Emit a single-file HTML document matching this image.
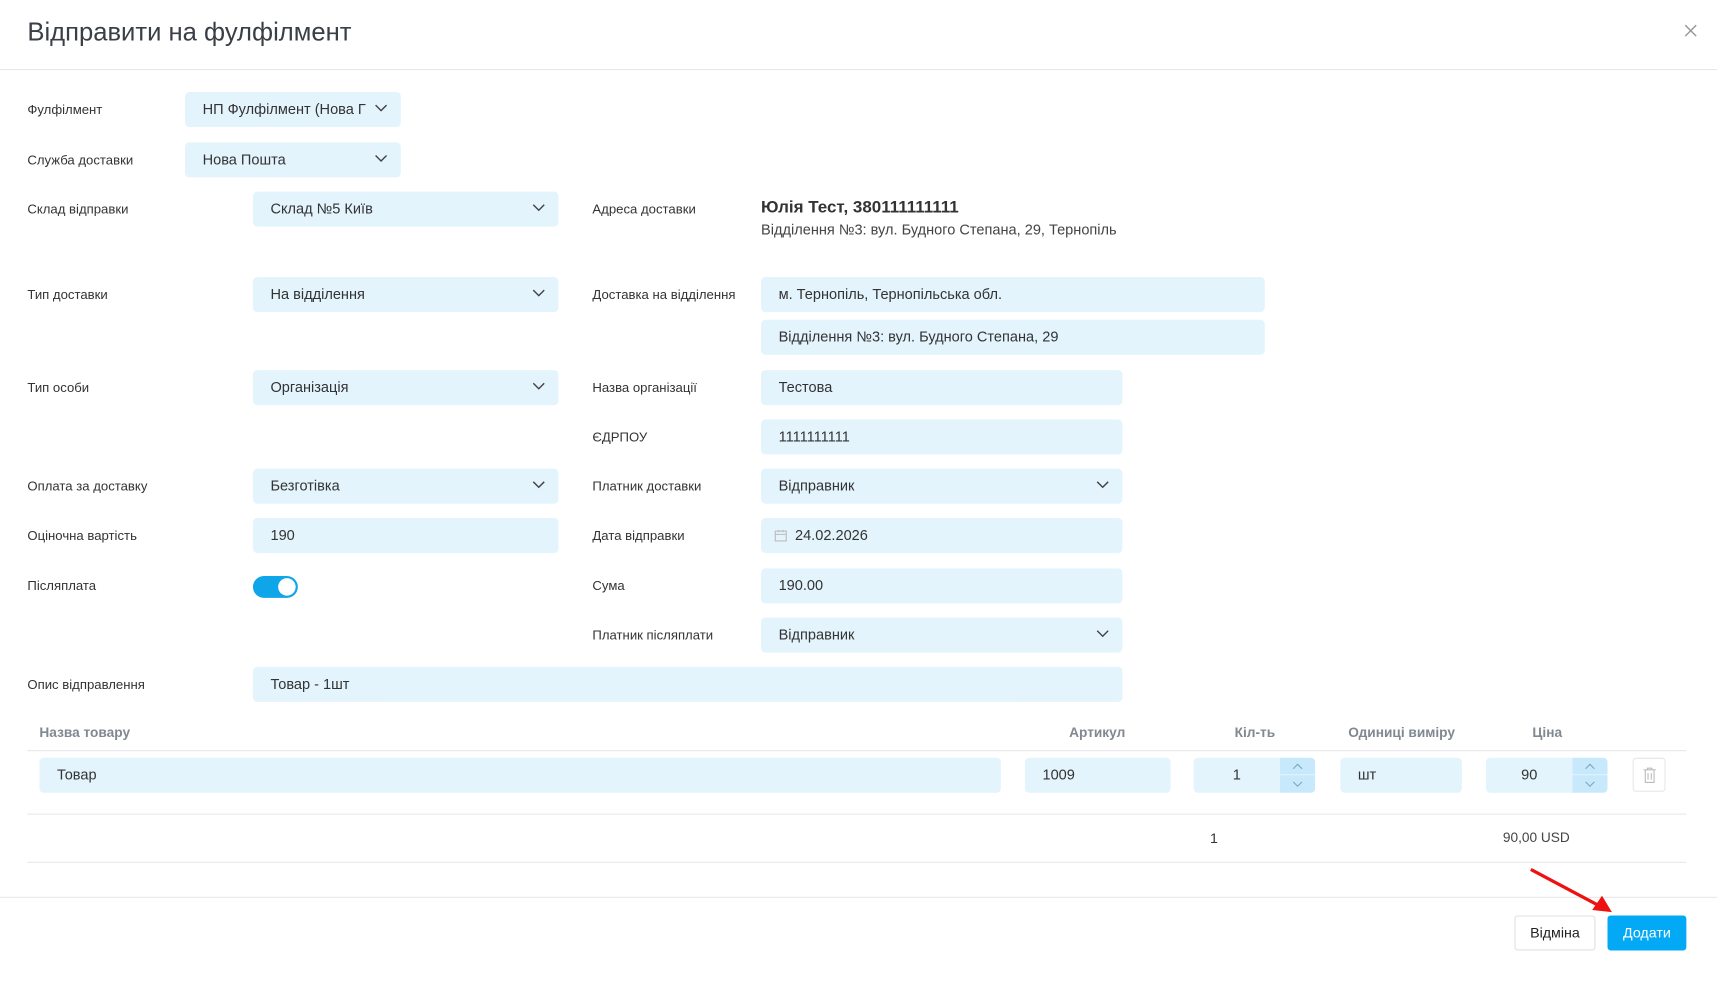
<!DOCTYPE html>
<html><head><meta charset="utf-8"><style>
html,body{margin:0;padding:0;background:#fff;overflow:hidden;width:1717px;height:993px}
#w{position:absolute;left:0;top:0;width:1568px;height:907px;transform:scale(1.09503);transform-origin:0 0;font-family:"Liberation Sans",sans-serif;color:#333}
.a{position:absolute}
.t{position:absolute;left:25px;top:16px;font-size:23.4px;color:#3a3f45}
.l{position:absolute;left:25px;font-size:12px;color:#333;line-height:16px}
.l2{left:541px}
.f{position:absolute;background:#e3f4fd;border-radius:4px;height:32px;line-height:32px;font-size:13.3px;color:#333;padding-left:16px;box-sizing:border-box;white-space:nowrap;overflow:hidden}
.f svg.c{position:absolute;right:12px;top:11px}
.hl{position:absolute;height:1px;background:#e8e8ec}
.th{position:absolute;top:662px;font-size:12.5px;font-weight:bold;color:#808890}
.sp{position:absolute;right:0;top:0;width:32px;height:32px;background:#c7e9fb}
.sp:after{content:"";position:absolute;left:0;right:0;top:15px;height:1px;background:#e3f4fd}
</style></head><body><div id="w">
<div class="t">Відправити на фулфілмент</div>
<svg class="a" style="left:1538px;top:22px" width="12" height="12"><path d="M1 1L11 11M11 1L1 11" stroke="#999" stroke-width="1.3"/></svg>
<div class="hl" style="left:0;right:0;top:63px"></div>

<div class="l" style="top:92px">Фулфілмент</div>
<div class="f" style="left:169px;top:84px;width:197px;padding-right:30px">НП Фулфілмент (Нова Г<svg class="c" width="12" height="8"><path d="M1 1L6 6L11 1" stroke="#444" fill="none" stroke-width="1.3"/></svg></div>
<div class="l" style="top:138px">Служба доставки</div>
<div class="f" style="left:169px;top:130px;width:197px">Нова Пошта<svg class="c" width="12" height="8"><path d="M1 1L6 6L11 1" stroke="#444" fill="none" stroke-width="1.3"/></svg></div>

<div class="l" style="top:183px">Склад відправки</div>
<div class="f" style="left:231px;top:175px;width:279px">Склад №5 Київ<svg class="c" width="12" height="8"><path d="M1 1L6 6L11 1" stroke="#444" fill="none" stroke-width="1.3"/></svg></div>
<div class="l l2" style="top:183px">Адреса доставки</div>
<div class="a" style="left:695px;top:181px;font-size:15.5px;font-weight:bold;color:#333">Юлія Тест, 380111111111</div>
<div class="a" style="left:695px;top:202px;font-size:13.3px;color:#444">Відділення №3: вул. Будного Степана, 29, Тернопіль</div>

<div class="l" style="top:261px">Тип доставки</div>
<div class="f" style="left:231px;top:253px;width:279px">На відділення<svg class="c" width="12" height="8"><path d="M1 1L6 6L11 1" stroke="#444" fill="none" stroke-width="1.3"/></svg></div>
<div class="l l2" style="top:261px">Доставка на відділення</div>
<div class="f" style="left:695px;top:253px;width:460px">м. Тернопіль, Тернопільська обл.</div>
<div class="f" style="left:695px;top:292px;width:460px">Відділення №3: вул. Будного Степана, 29</div>

<div class="l" style="top:346px">Тип особи</div>
<div class="f" style="left:231px;top:338px;width:279px">Організація<svg class="c" width="12" height="8"><path d="M1 1L6 6L11 1" stroke="#444" fill="none" stroke-width="1.3"/></svg></div>
<div class="l l2" style="top:346px">Назва організації</div>
<div class="f" style="left:695px;top:338px;width:330px">Тестова</div>
<div class="l l2" style="top:391px">ЄДРПОУ</div>
<div class="f" style="left:695px;top:383px;width:330px">1111111111</div>

<div class="l" style="top:436px">Оплата за доставку</div>
<div class="f" style="left:231px;top:428px;width:279px">Безготівка<svg class="c" width="12" height="8"><path d="M1 1L6 6L11 1" stroke="#444" fill="none" stroke-width="1.3"/></svg></div>
<div class="l l2" style="top:436px">Платник доставки</div>
<div class="f" style="left:695px;top:428px;width:330px">Відправник<svg class="c" width="12" height="8"><path d="M1 1L6 6L11 1" stroke="#444" fill="none" stroke-width="1.3"/></svg></div>

<div class="l" style="top:481px">Оціночна вартість</div>
<div class="f" style="left:231px;top:473px;width:279px">190</div>
<div class="l l2" style="top:481px">Дата відправки</div>
<div class="f" style="left:695px;top:473px;width:330px;padding-left:31px"><svg class="a" style="left:12px;top:10px" width="12" height="12"><rect x="1" y="2" width="10" height="9" fill="none" stroke="#bbb"/><path d="M1 5H11M4 1V3M8 1V3" stroke="#bbb"/></svg>24.02.2026</div>

<div class="l" style="top:527px">Післяплата</div>
<div class="a" style="left:231px;top:526px;width:41px;height:20px;border-radius:10px;background:#0ea5e9"><div class="a" style="right:2px;top:2px;width:16px;height:16px;border-radius:8px;background:#fff"></div></div>
<div class="l l2" style="top:527px">Сума</div>
<div class="f" style="left:695px;top:519px;width:330px">190.00</div>
<div class="l l2" style="top:572px">Платник післяплати</div>
<div class="f" style="left:695px;top:564px;width:330px">Відправник<svg class="c" width="12" height="8"><path d="M1 1L6 6L11 1" stroke="#444" fill="none" stroke-width="1.3"/></svg></div>

<div class="l" style="top:617px">Опис відправлення</div>
<div class="f" style="left:231px;top:609px;width:794px">Товар - 1шт</div>

<div class="th" style="left:36px">Назва товару</div>
<div class="th" style="left:952px;width:100px;text-align:center">Артикул</div>
<div class="th" style="left:1096px;width:100px;text-align:center">Кіл-ть</div>
<div class="th" style="left:1210px;width:140px;text-align:center">Одиниці виміру</div>
<div class="th" style="left:1363px;width:100px;text-align:center">Ціна</div>
<div class="hl" style="left:25px;width:1515px;top:685px"></div>

<div class="f" style="left:36px;top:692px;width:878px">Товар</div>
<div class="f" style="left:936px;top:692px;width:133px">1009</div>
<div class="f" style="left:1090px;top:692px;width:111px;padding:0 32px 0 0;text-align:center">1<div class="sp"><svg class="a" style="left:11px;top:5px" width="10" height="6"><path d="M1 5L5 1L9 5" stroke="#7ab" fill="none"/></svg><svg class="a" style="left:11px;top:21px" width="10" height="6"><path d="M1 1L5 5L9 1" stroke="#7ab" fill="none"/></svg></div></div>
<div class="f" style="left:1224px;top:692px;width:111px">шт</div>
<div class="f" style="left:1357px;top:692px;width:111px;padding:0 32px 0 0;text-align:center">90<div class="sp"><svg class="a" style="left:11px;top:5px" width="10" height="6"><path d="M1 5L5 1L9 5" stroke="#7ab" fill="none"/></svg><svg class="a" style="left:11px;top:21px" width="10" height="6"><path d="M1 1L5 5L9 1" stroke="#7ab" fill="none"/></svg></div></div>
<div class="a" style="left:1491px;top:692px;width:30px;height:31px;border:1px solid #e6e6ea;border-radius:3px;box-sizing:border-box"><svg class="a" style="left:8px;top:7px" width="13" height="16"><path d="M1 3H12M4.5 3V1.5H8.5V3M2.5 3.5V14.5H10.5V3.5M5 6V12M8 6V12" stroke="#bbb" fill="none"/></svg></div>

<div class="hl" style="left:25px;width:1515px;top:743px"></div>
<div class="a" style="left:1105px;top:758px;font-size:13px">1</div>
<div class="a" style="left:1353px;top:758px;width:100px;text-align:center;font-size:12.5px;color:#444">90,00 USD</div>
<div class="hl" style="left:25px;width:1515px;top:787px"></div>

<div class="hl" style="left:0;right:0;top:819px"></div>
<div class="a" style="left:1383px;top:836px;width:74px;height:32px;border:1px solid #e0e0e4;border-radius:3px;box-sizing:border-box;text-align:center;line-height:30px;font-size:13px;color:#222">Відміна</div>
<div class="a" style="left:1468px;top:836px;width:72px;height:32px;border-radius:3px;background:#03a9f4;text-align:center;line-height:32px;font-size:13px;color:#fff">Додати</div>
<svg class="a" style="left:1390px;top:788px" width="90" height="50"><path d="M8 6L72 40" stroke="#ee1111" stroke-width="3"/><path d="M82 45L64 43L73 30Z" fill="#ee1111"/></svg>
</div></body></html>
